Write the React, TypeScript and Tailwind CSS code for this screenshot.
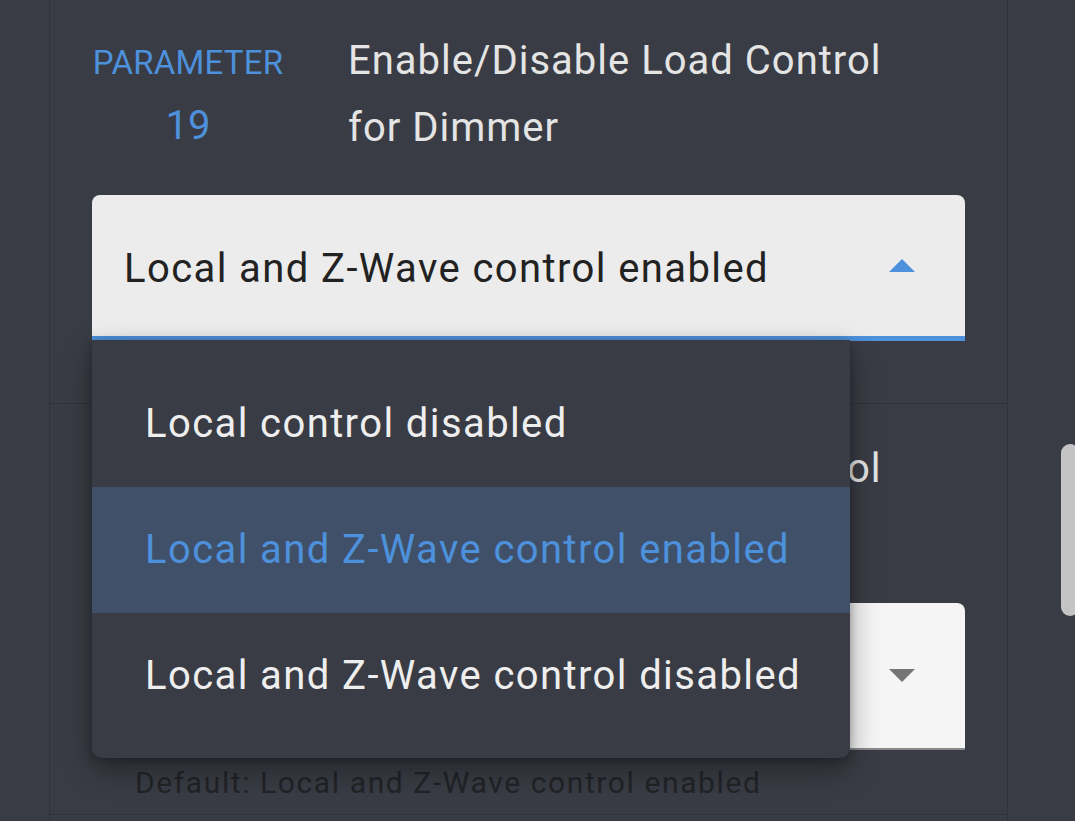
import React from "react";

const options = [
  "Local control disabled",
  "Local and Z-Wave control enabled",
  "Local and Z-Wave control disabled",
];

function Caret({ up, color }: { up?: boolean; color: string }) {
  return (
    <svg width="26" height="13" viewBox="0 0 26 13" className="shrink-0">
      <polygon points={up ? "0,13 13,0 26,13" : "0,0 13,13 26,0"} fill={color} />
    </svg>
  );
}

function ParamHeader({ num, line1, line2 }: { num: number; line1: string; line2: string }) {
  return (
    <div className="flex">
      <div className="w-[192px] shrink-0 mt-[17px] flex flex-col items-center text-[#4d90db]">
        <span className="text-[33px] leading-[40px] tracking-[0.2px]">PARAMETER</span>
        <span className="text-[40px] leading-[48px] mt-[19px]">{num}</span>
      </div>
      <div className="ml-[64px] pt-[1px] text-[40px] leading-[67px] tracking-[1px] text-[#e4e4e4]">
        <div>{line1}</div>
        <div>{line2}</div>
      </div>
    </div>
  );
}

export default function App() {
  return (
    <div
      className="relative w-[1075px] h-[821px] overflow-hidden bg-[#393c44] flex"
      style={{ fontFamily: "Roboto, 'Noto Sans', sans-serif" }}
    >
      <div className="w-[50px] shrink-0 border-r border-[#30333a]" />

      <div className="w-[958px] shrink-0 border-r border-[#30333a] flex flex-col">
        <section className="pl-[42px] pr-[42px] pt-[26px] pb-[62px] border-b border-[#30333a]">
          <ParamHeader num={19} line1="Enable/Disable Load Control" line2="for Dimmer" />
          <div className="mt-[34px] h-[146px] rounded-t-[8px] bg-[#ececec] border-b-[5px] border-[#4d90db] flex items-center pl-[32px] pr-[50px]">
            <span className="flex-1 pt-[6px] text-[40px] tracking-[1.4px] text-[#222222]">
              Local and Z-Wave control enabled
            </span>
            <Caret up color="#4d90db" />
          </div>
        </section>

        <section className="pl-[42px] pr-[42px] pt-[30px] pb-[13px] border-b border-[#30333a]">
          <ParamHeader num={20} line1="Enable/Disable Load Control" line2="for Switch" />
          <div className="mt-[34px] h-[147px] rounded-t-[8px] bg-[#f5f5f5] border-b-[2px] border-[#8a8a8a] flex items-center pl-[32px] pr-[50px]">
            <span className="flex-1 text-[40px] tracking-[1.4px] text-[#222222]">
              Local and Z-Wave control enabled
            </span>
            <Caret color="#757575" />
          </div>
          <div className="pl-[43px] pt-[15px] text-[30px] leading-[36px] tracking-[1.6px] text-[#222328]">
            Default: Local and Z-Wave control enabled
          </div>
        </section>

        <div className="flex-1" />
      </div>

      <div className="flex-1 relative">
        <div className="absolute left-[53px] top-[444px] w-[18px] h-[172px] rounded-full bg-[#c4c4c4]" />
      </div>

      <div className="absolute left-[92px] top-[340px] w-[758px] rounded-b-[10px] bg-[#393c44] pt-[21px] pb-[19px] shadow-[0_12px_30px_rgba(0,0,0,0.35),0_2px_8px_rgba(0,0,0,0.25)]">
        {options.map((opt, i) => (
          <div
            key={opt}
            className={
              i === 1
                ? "h-[126px] flex items-center pl-[53px] text-[40px] tracking-[1.4px] bg-[#405069] text-[#4d90db]"
                : "h-[126px] flex items-center pl-[53px] text-[40px] tracking-[1.4px] text-[#eeeeee]"
            }
          >
            {opt}
          </div>
        ))}
      </div>
    </div>
  );
}
